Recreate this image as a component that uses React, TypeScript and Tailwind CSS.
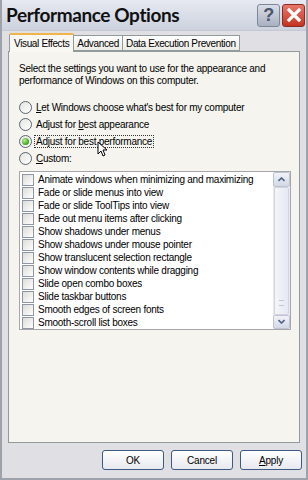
import { useState } from "react";

const effects = [
  "Animate windows when minimizing and maximizing",
  "Fade or slide menus into view",
  "Fade or slide ToolTips into view",
  "Fade out menu items after clicking",
  "Show shadows under menus",
  "Show shadows under mouse pointer",
  "Show translucent selection rectangle",
  "Show window contents while dragging",
  "Slide open combo boxes",
  "Slide taskbar buttons",
  "Smooth edges of screen fonts",
  "Smooth-scroll list boxes",
];

type Choice = "auto" | "appearance" | "performance" | "custom";

function Radio({ checked }: { checked: boolean }) {
  return (
    <span className="relative flex h-[13px] w-[13px] shrink-0 items-center justify-center rounded-full border border-[#5a6472] bg-gradient-to-br from-[#e4e4e0] to-white">
      {checked && (
        <span className="h-[7px] w-[7px] rounded-full bg-[radial-gradient(circle_at_35%_35%,#b8f08a,#34a11c_70%)]" />
      )}
    </span>
  );
}

function Button({ label, u }: { label: string; u?: boolean }) {
  return (
    <button className="flex h-[20px] w-[62px] items-center justify-center rounded-[3px] border border-[#3d5a85] bg-gradient-to-b from-white to-[#e8e9ef] text-[10px] tracking-[-0.2px] text-black">
      {u ? (
        <>
          <span className="underline">{label[0]}</span>
          {label.slice(1)}
        </>
      ) : (
        label
      )}
    </button>
  );
}

export default function App() {
  const [choice, setChoice] = useState<Choice>("performance");
  const [checked, setChecked] = useState<boolean[]>(effects.map(() => false));

  const options: { id: Choice; label: React.ReactNode }[] = [
    {
      id: "auto",
      label: (
        <>
          <span className="underline">L</span>et Windows choose what's best for my computer
        </>
      ),
    },
    {
      id: "appearance",
      label: (
        <>
          Adjust for <span className="underline">b</span>est appearance
        </>
      ),
    },
    { id: "performance", label: <>Adjust for best performance</> },
    {
      id: "custom",
      label: (
        <>
          <span className="underline">C</span>ustom:
        </>
      ),
    },
  ];

  return (
    <div
      className="relative flex h-[480px] w-[308px] flex-col border-x-[2px] border-b-[2px] border-[#9ea2aa] bg-[#e0e0e4] tracking-[-0.25px] text-black"
      style={{ fontFamily: '"Liberation Sans", Arial, sans-serif' }}
    >
      {/* title bar */}
      <div className="flex h-[31px] items-center justify-between border-b border-[#c3c8d4] bg-gradient-to-b from-[#e6e9f1] to-[#cdd2de] pl-[4px] pr-[1px]">
        <span
          className="text-[19px] font-bold tracking-[-0.4px] text-[#111]"
          style={{ fontFamily: "Lato, sans-serif" }}
        >
          Performance Options
        </span>
        <div className="flex gap-[2px]">
          <span className="flex h-[23px] w-[23px] items-center justify-center rounded-[3px] border border-[#7e8797] bg-gradient-to-b from-[#d9dde6] to-[#a9b0c0] text-[18px] font-bold text-[#4b5468]">
            ?
          </span>
          <span className="flex h-[23px] w-[23px] items-center justify-center rounded-[3px] border border-[#8e2a22] bg-gradient-to-b from-[#e8786a] to-[#c3321f]">
            <svg width="14" height="14" viewBox="0 0 14 14">
              <path d="M2 2 L12 12 M12 2 L2 12" stroke="white" strokeWidth="3.2" strokeLinecap="square" />
            </svg>
          </span>
        </div>
      </div>

      {/* tabs */}
      <div className="ml-[7px] mt-[2px] flex items-end text-[10px] tracking-[-0.35px]">
        <div className="relative z-10 -mb-px flex h-[19px] items-center rounded-t-[2px] border-x border-t-[2px] border-x-[#919b9c] border-t-[#f0b44a] bg-[#f8f7f2] px-[4px]">
          Visual Effects
        </div>
        <div className="flex h-[16px] items-center border-y border-r border-[#919b9c] bg-gradient-to-b from-white to-[#ecebe6] px-[3px]">
          Advanced
        </div>
        <div className="flex h-[16px] items-center border-y border-r border-[#919b9c] bg-gradient-to-b from-white to-[#ecebe6] px-[3px]">
          Data Execution Prevention
        </div>
      </div>

      {/* panel */}
      <div className="ml-[6px] flex h-[392px] w-[292px] flex-col border border-[#919b9c] bg-[#f5f4ef] px-[10px] pt-[11px] text-[10px] leading-[12px]">
        <p className="pr-[10px]">
          Select the settings you want to use for the appearance and performance of Windows on
          this computer.
        </p>

        <div className="mt-[14px] flex flex-col gap-[4px]">
          {options.map((o) => (
            <label
              key={o.id}
              className="flex h-[13px] cursor-default items-center gap-[2px]"
              onClick={() => setChoice(o.id)}
            >
              <Radio checked={choice === o.id} />
              <span
                className={
                  choice === o.id
                    ? "border border-dotted border-[#333] px-[1px] leading-[11px]"
                    : "px-[2px]"
                }
              >
                {o.label}
              </span>
            </label>
          ))}
        </div>

        <div className="mt-[6px] flex h-[159px] w-[272px] border border-[#a7a6aa] bg-white">
          <div className="flex flex-1 flex-col pl-[2px] pt-[1px]">
            {effects.map((e, i) => (
              <div key={e} className="flex h-[13.1px] items-center gap-[4px]">
                <span
                  onClick={() =>
                    setChecked((p) => p.map((v, j) => (j === i ? !v : v)))
                  }
                  className="flex h-[12px] w-[12px] items-center justify-center border border-[#8e97a3] bg-gradient-to-br from-[#dcdcd7] to-white text-[9px]"
                >
                  {checked[i] ? "✓" : ""}
                </span>
                <span className="whitespace-nowrap">{e}</span>
              </div>
            ))}
          </div>
          <div className="flex w-[17px] flex-col bg-[#f3f3f7]">
            <span className="flex h-[17px] items-center justify-center rounded-[2px] border border-[#bcc3d3] bg-gradient-to-b from-[#f2f3f8] to-[#d3d8e5]">
              <svg width="7" height="5" viewBox="0 0 7 5">
                <path d="M0.5 4 L3.5 1 L6.5 4" stroke="#4d6185" strokeWidth="1.6" fill="none" />
              </svg>
            </span>
            <div className="flex flex-1 flex-col border-x border-[#eaeaee] bg-gradient-to-r from-[#ebebf1] to-[#f7f7fa]">
              <div className="flex h-[128px] items-end justify-center rounded-[2px] border border-[#d0d4e0] bg-gradient-to-r from-[#f4f5f9] to-[#e6e9f2] pb-[8px]">
                <span className="h-[6px] w-[5px] border-y border-[#c2c6d2]" />
              </div>
            </div>
            <span className="flex h-[17px] items-center justify-center rounded-[2px] border border-[#bcc3d3] bg-gradient-to-b from-[#f2f3f8] to-[#d3d8e5]">
              <svg width="7" height="5" viewBox="0 0 7 5">
                <path d="M0.5 1 L3.5 4 L6.5 1" stroke="#4d6185" strokeWidth="1.6" fill="none" />
              </svg>
            </span>
          </div>
        </div>
      </div>

      {/* buttons */}
      <div className="mt-[7px] flex justify-end gap-[7px] pr-[4px]">
        <Button label="OK" />
        <Button label="Cancel" />
        <Button label="Apply" u />
      </div>

      {/* mouse pointer */}
      <svg
        className="absolute left-[95px] top-[141px]"
        width="10"
        height="16"
        viewBox="0 0 10 16"
      >
        <path
          d="M1 1 L1 13 L4 10 L6 15 L8 14 L6 9 L10 9 Z"
          fill="white"
          stroke="black"
          strokeWidth="1"
          strokeLinejoin="round"
        />
      </svg>
    </div>
  );
}
